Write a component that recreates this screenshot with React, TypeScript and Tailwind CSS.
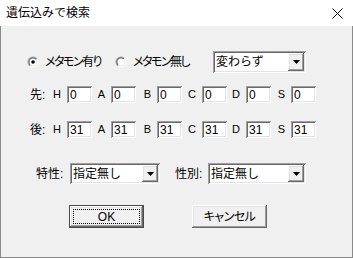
import { useId } from "react";

const sunken =
  "shadow-[inset_1px_1px_0_#a0a0a0,inset_-1px_-1px_0_#ffffff,inset_2px_2px_0_#696969,inset_-2px_-2px_0_#e3e3e3]";
const raised =
  "shadow-[inset_-1px_-1px_0_#696969,inset_1px_1px_0_#ffffff,inset_-2px_-2px_0_#a0a0a0,inset_2px_2px_0_#e3e3e3]";

function Radio({ label, checked, className }: { label: string; checked?: boolean; className: string }) {
  const id = useId();
  return (
    <div className={`flex items-center ${className}`}>
      <svg width="12" height="12" viewBox="0 0 12 12" className="shrink-0">
        <defs>
          <linearGradient id={`${id}o`} x1="0" y1="0" x2="1" y2="1">
            <stop offset="0.5" stopColor="#a0a0a0" />
            <stop offset="0.5" stopColor="#ffffff" />
          </linearGradient>
          <linearGradient id={`${id}i`} x1="0" y1="0" x2="1" y2="1">
            <stop offset="0.5" stopColor="#696969" />
            <stop offset="0.5" stopColor="#e3e3e3" />
          </linearGradient>
        </defs>
        <circle cx="6" cy="6" r="5.5" fill={`url(#${id}o)`} />
        <circle cx="6" cy="6" r="4.5" fill={`url(#${id}i)`} />
        <circle cx="6" cy="6" r="3.5" fill="#ffffff" />
        {checked && <circle cx="6" cy="6" r="1.8" fill="#000000" />}
      </svg>
      <span className="ml-[6px] text-[12px] tracking-[-1.5px] [font-feature-settings:'palt']">{label}</span>
    </div>
  );
}

function Combo({ value, className }: { value: string; className: string }) {
  return (
    <div className={`flex h-full bg-white p-[2px] ${sunken} ${className}`}>
      <span className="flex flex-1 items-center pl-[1px]">{value}</span>
      <div className={`flex w-[16px] items-center justify-center bg-[#f0f0f0] ${raised}`}>
        <svg width="7" height="4" viewBox="0 0 7 4">
          <path d="M0 0h7L3.5 4z" fill="#000000" />
        </svg>
      </div>
    </div>
  );
}

function StatRow({ label, values, className }: { label: string; values: string[]; className: string }) {
  const stats = ["H", "A", "B", "C", "D", "S"];
  const widths = ["w-[45px]", "w-[44px]", "w-[46px]", "w-[45px]", "w-[44px]", "w-[45px]"];
  return (
    <div className={`flex h-[17px] items-center pl-[29px] ${className}`}>
      <span className="w-[17px]">{label}</span>
      {stats.map((s, i) => (
        <div key={s} className={`flex h-full items-center justify-end ${widths[i]}`}>
          <span className="text-[11px]">{s}</span>
          <div className={`ml-[6px] flex h-full w-[25px] items-center bg-white pl-[3px] text-[12px] ${sunken}`}>
            {values[i]}
          </div>
        </div>
      ))}
    </div>
  );
}

export default function App() {
  return (
    <div className="flex h-[258px] w-[353px] flex-col bg-white font-['Liberation_Sans','Noto_Sans_CJK_JP',sans-serif] text-[12px] leading-none text-black">
      <div className="flex h-[26px] shrink-0 items-center justify-between pl-[6px] pr-[10px]">
        <span>遺伝込みで検索</span>
        <svg width="11" height="11" viewBox="0 0 11 11">
          <path d="M0.5 0.5l10 10M10.5 0.5l-10 10" stroke="#000000" strokeWidth="1" />
        </svg>
      </div>

      <div className="flex flex-1 flex-col border-x border-b border-[#8a8a8a] bg-[#f0f0f0]">
        <div className="mt-[25px] flex h-[22px] items-center pl-[26px]">
          <Radio checked label="メタモン有り" className="w-[88px]" />
          <Radio label="メタモン無し" className="w-[98px]" />
          <Combo value="変わらず" className="w-[93px]" />
        </div>

        <StatRow label="先:" values={["0", "0", "0", "0", "0", "0"]} className="mt-[13px]" />
        <StatRow label="後:" values={["31", "31", "31", "31", "31", "31"]} className="mt-[18px]" />

        <div className="mt-[25px] flex h-[21px] items-center pl-[35px]">
          <span className="w-[34px]">特性:</span>
          <Combo value="指定無し" className="w-[90px]" />
          <span className="ml-[15px] w-[33px]">性別:</span>
          <Combo value="指定無し" className="w-[98px]" />
        </div>

        <div className="mt-[21px] flex h-[23px] pl-[68px]">
          <div className="w-[75px] border border-[#4a4a4a]">
            <div className={`flex h-full items-center justify-center bg-[#f0f0f0] p-[3px] ${raised}`}>
              <div className="flex h-full w-full items-center justify-center border border-dotted border-black text-[12px]">
                OK
              </div>
            </div>
          </div>
          <div
            className={`ml-[48px] flex w-[75px] items-center justify-center bg-[#f0f0f0] tracking-[-0.5px] [font-feature-settings:'palt'] ${raised}`}
          >
            キャンセル
          </div>
        </div>
      </div>
    </div>
  );
}
